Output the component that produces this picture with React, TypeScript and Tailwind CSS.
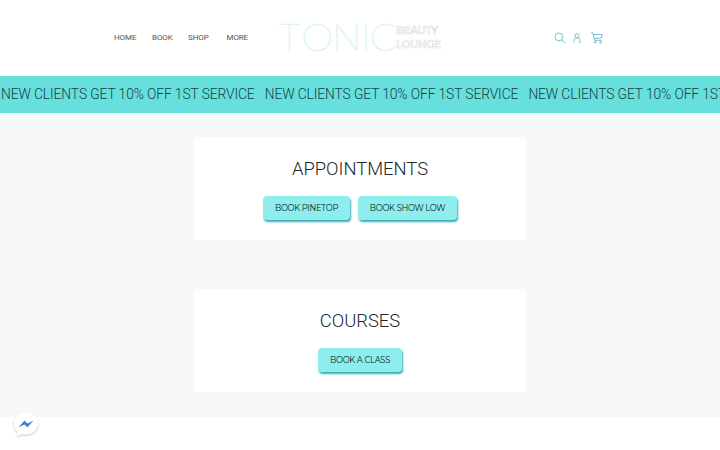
const navItems = [
  { label: "HOME", className: "w-[38px]" },
  { label: "BOOK", className: "w-[36px]" },
  { label: "SHOP", className: "w-[38.5px]" },
  { label: "MORE", className: "" },
];

const promo = "NEW CLIENTS GET 10% OFF 1ST SERVICE";

function Logo() {
  return (
    <svg
      className="h-[50px] w-[180px]"
      viewBox="0 0 180 50"
      fontFamily="Montserrat, Lato, 'Liberation Sans', sans-serif"
    >
      <text
        x="9 31.5 61.5 90.5 100"
        y="36"
        fontSize="37.5"
        fontWeight="100"
        fill="#d9f5f4"
        stroke="#d9f5f4"
        strokeWidth="0.4"
      >
        TONIC
      </text>
      <g fontSize="10.5" fontWeight="600" fill="#fff" stroke="#dedede" strokeWidth="0.6">
        <text x="126" y="18.5" textLength="42">
          BEAUTY
        </text>
        <text x="126" y="32.5" textLength="45">
          LOUNGE
        </text>
      </g>
    </svg>
  );
}

function HeaderIcons() {
  return (
    <div className="flex items-center text-[#68b9c4]">
      <svg className="h-3 w-3" viewBox="0 0 12 12" fill="none" stroke="currentColor" strokeWidth="0.9">
        <circle cx="4.9" cy="4.9" r="3.9" />
        <path d="M7.7 7.7 11.2 11.2" />
      </svg>
      <svg className="ml-1.5 h-3 w-2.5" viewBox="0 0 10 12" fill="none" stroke="currentColor" strokeWidth="0.9">
        <circle cx="5" cy="3.7" r="2.1" />
        <path d="M2 10.5V8.2C2 4.9 8 4.9 8 8.2V10.5H6.8" />
      </svg>
      <svg className="ml-[9px] h-3 w-3" viewBox="0 0 12 12" fill="none" stroke="currentColor" strokeWidth="0.9">
        <path d="M0 .8h2l1.7 7.5h6.7M2.4 2.5h8.8l-.8 3.5-7.1.6" />
        <circle cx="4.3" cy="10.2" r=".9" />
        <circle cx="9.6" cy="10.2" r=".9" />
      </svg>
    </div>
  );
}

function BookingCard({ title, buttons }: { title: string; buttons: { label: string; className: string }[] }) {
  return (
    <section className="flex h-[103px] w-[332px] flex-col items-center bg-white pt-5">
      <h2 className="text-[18.4px] leading-6 font-light whitespace-nowrap text-[#1d272b]">{title}</h2>
      <div className="mt-[15px] flex gap-2">
        {buttons.map((b) => (
          <button
            key={b.label}
            className={`h-6 rounded-[4px] bg-[#8eeeee] pt-px font-[Montserrat,Lato,sans-serif] text-[8.3px] tracking-[-0.28px] whitespace-nowrap text-[#08282b] shadow-[1px_2px_2px_#36aeb5] ${b.className}`}
          >
            {b.label}
          </button>
        ))}
      </div>
    </section>
  );
}

export default function App() {
  return (
    <div className="relative h-[450px] w-[720px] overflow-hidden bg-white font-[Roboto,sans-serif]">
      <header className="flex h-[76px] pl-[114px]">
        <nav className="flex h-[76px] w-[156px] items-center text-[8px] tracking-[-0.1px] text-[#555]">
          {navItems.map((item) => (
            <a key={item.label} className={`shrink-0 ${item.className}`}>
              {item.label}
            </a>
          ))}
        </nav>
        <div className="pt-[15px]">
          <Logo />
        </div>
        <div className="ml-[104px] flex h-[76px] items-center">
          <HeaderIcons />
        </div>
      </header>

      <div className="flex h-[37px] items-center overflow-hidden bg-[#66dfdd] pl-px text-[13.8px] font-light tracking-[-0.1px] whitespace-nowrap text-[#163f43]">
        {[0, 1, 2].map((n) => (
          <span key={n} className="w-[263.7px] shrink-0">
            {promo}
          </span>
        ))}
      </div>

      <main className="flex h-[304px] flex-col items-center gap-[49px] bg-[#f6f8fa] pt-6">
        <BookingCard
          title="APPOINTMENTS"
          buttons={[
            { label: "BOOK PINETOP", className: "w-[87px]" },
            { label: "BOOK SHOW LOW", className: "w-[99px]" },
          ]}
        />
        <BookingCard title="COURSES" buttons={[{ label: "BOOK A CLASS", className: "w-[84px]" }]} />
      </main>

      <button className="absolute top-[410px] left-[11px]" aria-label="Messenger">
        <svg className="h-[30px] w-[30px] drop-shadow-[0_1px_1px_rgba(0,0,0,0.2)]" viewBox="0 0 30 30">
          <path
            d="M15 2c6.8 0 12 4.8 12 11.2S21.8 24.5 15 24.5c-1.5 0-3-.2-4.3-.6L6 26.5l.5-4.4C4.2 20 3 17 3 13.2 3 6.8 8.2 2 15 2z"
            fill="#fff"
          />
          <path d="M7.5 17.2 13.5 10.6 16.5 13.5 22.5 10.6 16.5 17.2 13.4 14.5z" fill="#3b7ee0" />
        </svg>
      </button>
    </div>
  );
}
